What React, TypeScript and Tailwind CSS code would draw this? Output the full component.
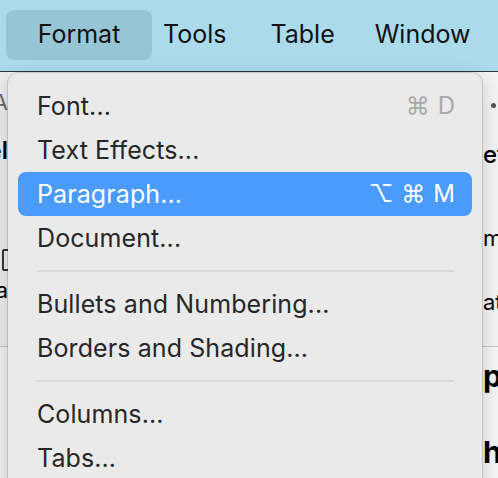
import React from 'react';

const font = { fontFamily: 'Inter, "DejaVu Sans", sans-serif' };

type Item = { label: string; keys?: string[]; active?: boolean } | 'sep';

const items: Item[] = [
  { label: 'Font...', keys: ['⌘', 'D'] },
  { label: 'Text Effects...' },
  { label: 'Paragraph...', keys: ['⌥', '⌘', 'M'], active: true },
  { label: 'Document...' },
  'sep',
  { label: 'Bullets and Numbering...' },
  { label: 'Borders and Shading...' },
  'sep',
  { label: 'Columns...' },
  { label: 'Tabs...' },
];

function MenuRow({ item }: { item: Item }) {
  if (item === 'sep') {
    return (
      <div className="h-[22px] flex items-center pl-[19px] pr-[18px]">
        <div className="h-[2px] w-full bg-[#d8d8d8]" />
      </div>
    );
  }
  return (
    <div
      className={`h-[44px] flex items-center justify-between pl-[19px] pr-[17px] rounded-[8px] ${
        item.active ? 'bg-[#4a9bfa] text-white' : 'text-[#262626]'
      }`}
    >
      <span className="text-[25px] leading-none tracking-[0.1px]">{item.label}</span>
      {item.keys && (
        <span
          className={`flex items-center gap-[8px] text-[24px] leading-none ${
            item.active ? 'text-white' : 'text-[#a9a9a9]'
          }`}
        >
          {item.keys.map((k, i) => (
            <span key={i}>{k}</span>
          ))}
        </span>
      )}
    </div>
  );
}

export default function App() {
  return (
    <div className="relative w-[498px] h-[478px] overflow-hidden bg-[#f2f2f2]" style={font}>
      {/* Menu bar */}
      <div className="h-[72px] bg-[#abdbeb] border-b border-[#2c3538] flex items-start pt-[10px] pl-[6px] text-[25px] text-[#111]">
        <div className="w-[146px] h-[50px] rounded-[8px] bg-[#96c6d5] flex items-center justify-center">
          Format
        </div>
        <div className="h-[50px] flex items-center ml-[11px]">Tools</div>
        <div className="h-[50px] flex items-center ml-[44px]">Table</div>
        <div className="h-[50px] flex items-center ml-[40px]">Window</div>
      </div>

      {/* Document behind the menu */}
      <div className="flex justify-between">
        <div className="w-[8px] overflow-hidden">
          <div className="h-[275px] bg-[#ececec] border-b border-[#c4c4c4] flex flex-col items-end pt-[19px]">
            <div className="h-[22px] flex justify-end whitespace-nowrap text-[22px] leading-none text-[#666]">A</div>
            <div className="mt-[26px] h-[24px] flex justify-end whitespace-nowrap text-[24px] font-semibold leading-none text-black">el</div>
            <div className="mt-[86px] h-[22px] w-[14px] -mr-[8px] border-[2px] border-[#333] rounded-[2px]" />
            <div className="mt-[8px] h-[20px] flex justify-end whitespace-nowrap text-[22px] leading-none text-black">a</div>
          </div>
          <div className="h-[131px] bg-[#f0f0f0]" />
        </div>

        <div className="w-[16px] overflow-hidden">
          <div className="h-[275px] bg-[#f3f3f3] border-b border-[#c4c4c4] flex flex-col pt-[25px] pl-[1px]">
            <div className="h-[16px] flex items-center pl-[8px]">
              <div className="w-[5px] h-[5px] rounded-full bg-[#555]" />
            </div>
            <div className="mt-[30px] h-[26px] whitespace-nowrap text-[24px] font-medium leading-none text-black">efe</div>
            <div className="mt-[58px] h-[24px] whitespace-nowrap text-[22px] leading-none text-black">m</div>
            <div className="mt-[40px] h-[24px] whitespace-nowrap text-[22px] leading-none text-black">at</div>
          </div>
          <div className="h-[131px] bg-[#f4f4f4] pt-[14px] pl-[1px]">
            <div className="h-[34px] whitespace-nowrap text-[30px] font-bold leading-none text-black">p</div>
            <div className="mt-[42px] h-[34px] whitespace-nowrap text-[30px] font-bold leading-none text-black">h</div>
          </div>
        </div>
      </div>

      {/* Format menu */}
      <div className="absolute left-[8px] top-[73px] w-[474px] h-[420px] bg-[#eaeaea] rounded-t-[10px] shadow-[0_0_0_1px_rgba(0,0,0,0.12),0_6px_20px_rgba(0,0,0,0.18)] pt-[11px] px-[10px]">
        {items.map((it, i) => (
          <MenuRow key={i} item={it} />
        ))}
      </div>
    </div>
  );
}
